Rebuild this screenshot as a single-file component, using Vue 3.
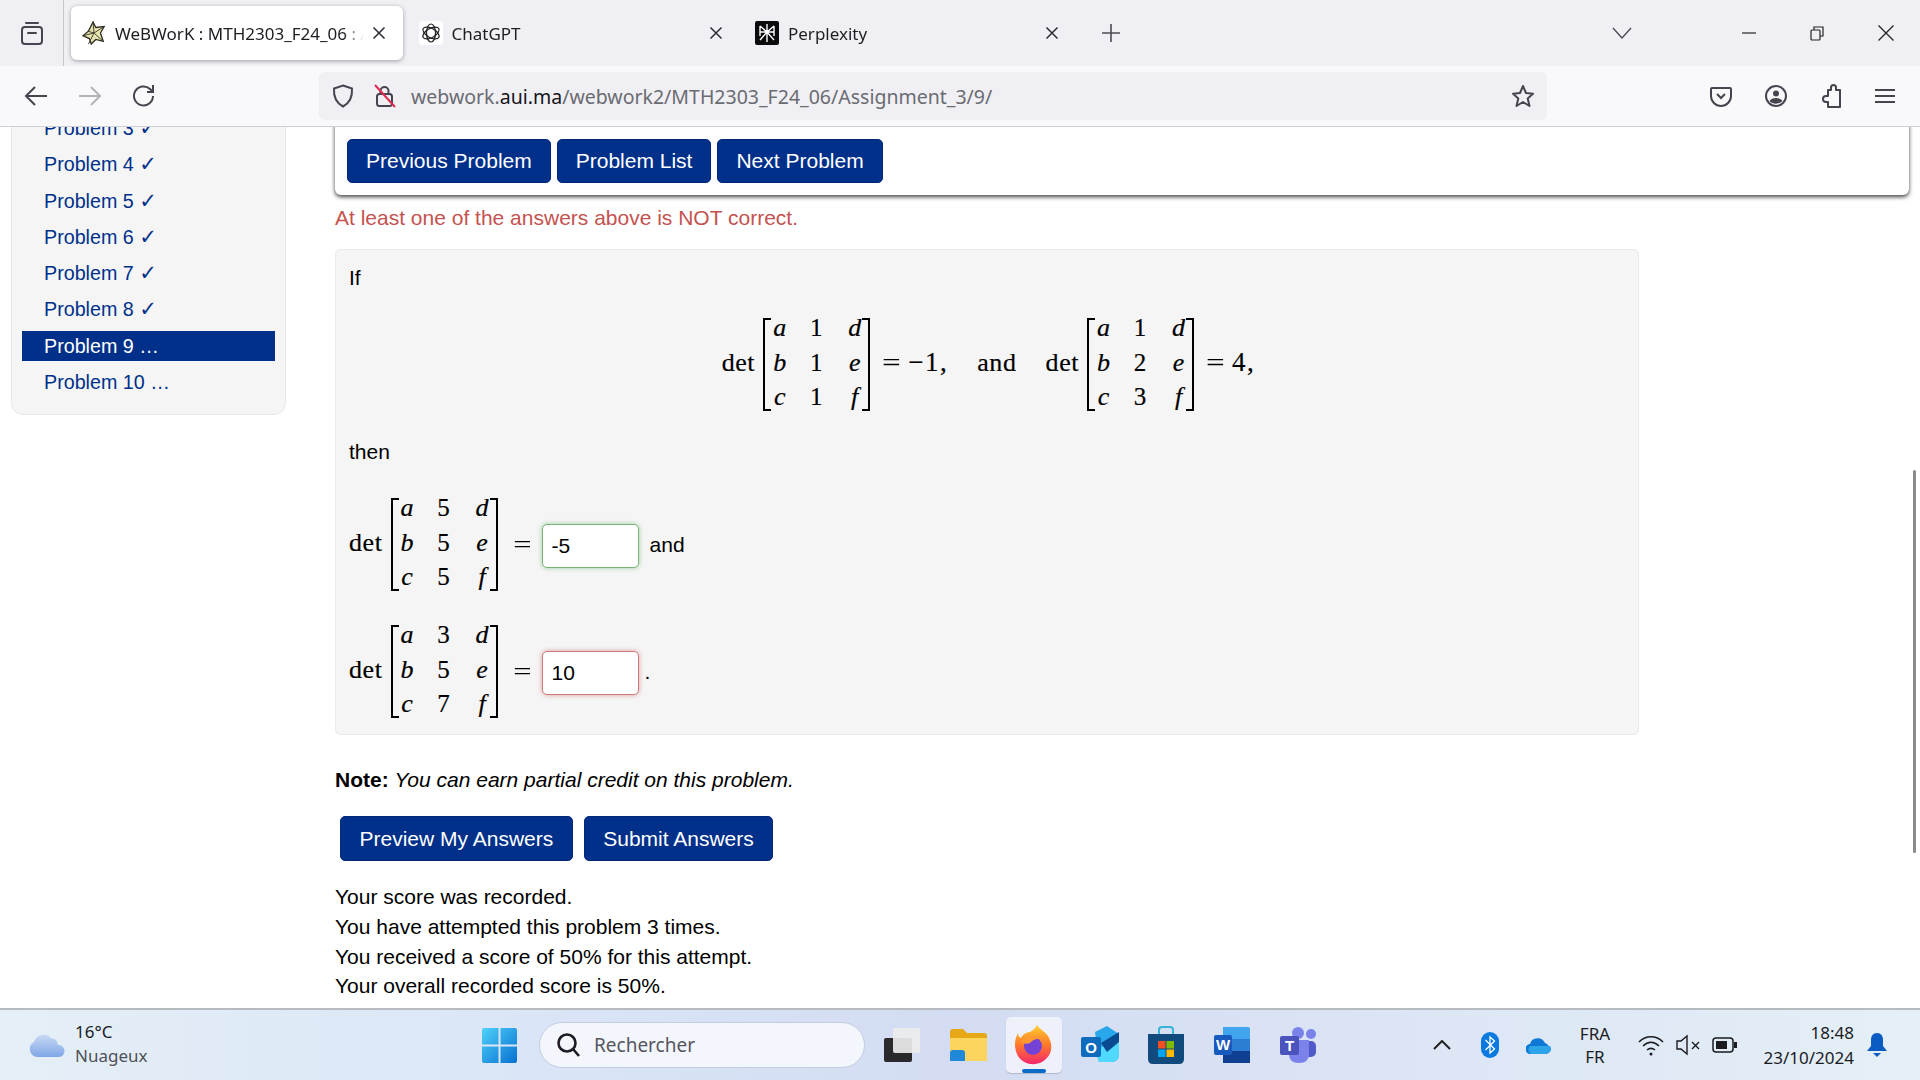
<template>
  <div class="screen">
    <!-- browser tab strip -->
    <header class="tabstrip">
      <div class="tab-manager">
        <svg width="26" height="26" viewBox="0 0 26 26" fill="none" stroke="#45454f" stroke-width="2">
          <rect x="3" y="7" width="20" height="17" rx="3" />
          <path d="M7 3h12M9 13h8" stroke-linecap="round" />
        </svg>
      </div>
      <div v-for="tab in tabs" :key="tab.title" class="tab" :class="{ 'tab--active': tab.active }">
        <span class="tab__icon">
          <svg v-if="tab.icon === 'web'" width="26" height="26" viewBox="0 0 26 26">
            <path d="M12 1l3 6 9-1-4 7 3 9-8-2-5 5-2-6-7-3 6-5z" fill="#e8e4b0" stroke="#2b2b20" stroke-width="1.4" />
            <path d="M12 1l1 12 10 9M24 6L13 13 7 25M1 16l12-3M6 11l7 2" fill="none" stroke="#3a3a28" stroke-width="1" />
          </svg>
          <svg v-else-if="tab.icon === 'gpt'" width="24" height="24" viewBox="0 0 24 24" fill="none" stroke="#222" stroke-width="1.2">
            <rect width="24" height="24" rx="4" fill="#fff" stroke="none" />
            <ellipse cx="12" cy="12" rx="4.5" ry="9" />
            <ellipse cx="12" cy="12" rx="4.5" ry="9" transform="rotate(60 12 12)" />
            <ellipse cx="12" cy="12" rx="4.5" ry="9" transform="rotate(120 12 12)" />
          </svg>
          <svg v-else width="24" height="24" viewBox="0 0 24 24" fill="none" stroke="#fff" stroke-width="1.4">
            <rect width="24" height="24" rx="2" fill="#0c0c0c" stroke="none" />
            <path d="M12 3v18M5 5l7 6 7-6M5 19l7-8 7 8M5 5v10M19 5v10M5 11h14" />
          </svg>
        </span>
        <span class="tab__title">{{ tab.title }}</span>
        <svg class="tab__close" width="14" height="14" viewBox="0 0 14 14" stroke="#2b2b33" stroke-width="1.5">
          <path d="M1.5 1.5l11 11M12.5 1.5l-11 11" />
        </svg>
      </div>
      <svg class="tab-plus" width="20" height="20" viewBox="0 0 20 20" stroke="#4c4c55" stroke-width="1.6">
        <path d="M10 1v18M1 10h18" />
      </svg>
      <span class="spacer"></span>
      <svg class="win-chevron" width="20" height="12" viewBox="0 0 20 12" fill="none" stroke="#4c4c55" stroke-width="1.4">
        <path d="M1 1l9 10 9-10" />
      </svg>
      <svg class="win-min" width="14" height="2" viewBox="0 0 14 2"><path d="M0 1h14" stroke="#333" stroke-width="1.3" /></svg>
      <svg class="win-restore" width="14" height="15" viewBox="0 0 14 15" fill="none" stroke="#222" stroke-width="1.2">
        <rect x="1" y="4" width="9" height="10" rx="1" />
        <path d="M4 4V1h9v9h-3" />
      </svg>
      <svg class="win-close" width="16" height="16" viewBox="0 0 16 16" stroke="#222" stroke-width="1.3">
        <path d="M.5.5l15 15M15.500.5l-15 15" />
      </svg>
    </header>

    <!-- navigation toolbar -->
    <nav class="toolbar">
      <svg class="nav-btn nav-btn--first" width="24" height="24" viewBox="0 0 24 24" fill="none" stroke="#45454f" stroke-width="2">
        <path d="M23 12H2M11 3l-9 9 9 9" />
      </svg>
      <svg class="nav-btn" width="24" height="24" viewBox="0 0 24 24" fill="none" stroke="#b3b3b8" stroke-width="2">
        <path d="M1 12h21M13 3l9 9-9 9" />
      </svg>
      <svg class="nav-btn" width="24" height="24" viewBox="0 0 24 24" fill="none" stroke="#45454f" stroke-width="2">
        <path d="M21 12a9.5 9.5 0 1 1-3-7l3 3M21 1v7h-6" />
      </svg>
      <div class="urlbar">
        <svg width="22" height="24" viewBox="0 0 22 24" fill="none" stroke="#45454f" stroke-width="2">
          <path d="M11 1.500l9 3c.5 8-1.500 14-9 18-7.500-4-9.500-10-9-18z" />
        </svg>
        <svg class="urlbar__lock" width="22" height="24" viewBox="0 0 22 24" fill="none">
          <rect x="3" y="10" width="15" height="12" rx="2.500" stroke="#45454f" stroke-width="2" />
          <path d="M6.500 10V7a4 4 0 0 1 8 0v3" stroke="#45454f" stroke-width="2" />
          <path d="M1 1l20 22" stroke="#e22850" stroke-width="2" />
        </svg>
        <span class="urlbar__text">webwork.<b>aui.ma</b>/webwork2/MTH2303_F24_06/Assignment_3/9/</span>
        <svg width="24" height="24" viewBox="0 0 24 24" fill="none" stroke="#45454f" stroke-width="2" stroke-linejoin="round">
          <path d="M12 2l3 7 7 .8-5.300 4.700L18.500 22 12 18l-6.500 4 1.800-7.500L2 9.800 9 9z" />
        </svg>
      </div>
      <div class="tools">
        <svg width="22" height="22" viewBox="0 0 22 22" fill="none" stroke="#45454f" stroke-width="2">
          <path d="M2 3h18a1 1 0 0 1 1 1v7a10 10 0 0 1-20 0V4a1 1 0 0 1 1-1z" />
          <path d="M7 9l4 4 4-4" />
        </svg>
        <svg width="22" height="22" viewBox="0 0 22 22" fill="none" stroke="#45454f" stroke-width="2">
          <circle cx="11" cy="11" r="10" />
          <circle cx="11" cy="8.500" r="3" fill="#45454f" stroke="none" />
          <path d="M4.500 16c2-4 11-4 13 0-3 3.500-10 3.500-13 0z" fill="#45454f" stroke="none" />
        </svg>
        <svg width="22" height="24" viewBox="0 0 22 24" fill="none" stroke="#45454f" stroke-width="2" stroke-linejoin="round">
          <path d="M8 6h3V3.500a2.500 2.500 0 0 1 5 0V6h4v17H8v-5H6a3 3 0 0 1 0-6h2z" />
        </svg>
        <svg width="20" height="16" viewBox="0 0 20 16" stroke="#45454f" stroke-width="2">
          <path d="M0 2h20M0 8h20M0 14h20" />
        </svg>
      </div>
    </nav>

    <!-- page, scrolled part way down -->
    <main class="page">
      <aside class="sidebar">
        <a
          v-for="item in problems"
          :key="item.label"
          class="sidebar__link"
          :class="{ 'sidebar__link--active': item.active }"
        >{{ item.label }} <span :class="{ sidebar__check: item.mark === '✓' }">{{ item.mark }}</span></a>
      </aside>

      <section class="content">
        <div class="nav-panel">
          <button v-for="label in navButtons" :key="label" class="btn">{{ label }}</button>
        </div>
        <p class="error">At least one of the answers above is NOT correct.</p>

        <div class="problem">
          <p class="problem__text">If</p>
          <div class="display">
            <template v-for="(m, i) in displayMatrices" :key="i">
              <span class="op">det</span>
              <div class="matrix">
                <span v-for="(c, j) in m.cells" :key="j" class="cell" :class="{ 'cell--var': isNaN(c) }">{{ c }}</span>
              </div>
              <span class="tail"><span class="eq">=</span>{{ m.tail }}</span>
              <span v-if="i === 0" class="display__and">and</span>
            </template>
          </div>
          <p class="problem__text problem__text--then">then</p>

          <div class="answer answer--first">
            <span class="op">det</span>
            <div class="matrix">
              <span v-for="(c, j) in answerA" :key="j" class="cell" :class="{ 'cell--var': isNaN(c) }">{{ c }}</span>
            </div>
            <span class="eq eq--answer">=</span>
            <input class="field field--ok" value="-5" readonly />
            <span class="answer__after">and</span>
          </div>
          <div class="answer">
            <span class="op">det</span>
            <div class="matrix">
              <span v-for="(c, j) in answerB" :key="j" class="cell" :class="{ 'cell--var': isNaN(c) }">{{ c }}</span>
            </div>
            <span class="eq eq--answer">=</span>
            <input class="field field--bad" value="10" readonly />
            <span class="answer__after answer__after--dot">.</span>
          </div>
        </div>

        <p class="note"><b>Note:</b> <i>You can earn partial credit on this problem.</i></p>
        <div class="submit-row">
          <button class="btn btn--tall">Preview My Answers</button>
          <button class="btn btn--tall">Submit Answers</button>
        </div>
        <p class="score">
          Your score was recorded.<br />
          You have attempted this problem 3 times.<br />
          You received a score of 50% for this attempt.<br />
          Your overall recorded score is 50%.
        </p>
      </section>

      <div class="scrollbar"><div class="scrollbar__thumb"></div></div>
    </main>

    <!-- windows taskbar -->
    <footer class="taskbar">
      <div class="weather">
        <svg width="38" height="26" viewBox="0 0 38 26">
          <defs>
            <linearGradient id="cloud" x1="0" y1="0" x2="0" y2="1">
              <stop offset="0" stop-color="#c9d9f5" />
              <stop offset="1" stop-color="#7fa6e6" />
            </linearGradient>
          </defs>
          <path d="M9 25a8 8 0 0 1-3-15 10 10 0 0 1 17-4 8 8 0 0 1 7 7 6 6 0 0 1 1 12z" fill="url(#cloud)" />
        </svg>
        <div class="weather__text">
          <span class="weather__temp">16°C</span>
          <span class="weather__state">Nuageux</span>
        </div>
      </div>

      <div class="slot">
        <svg width="35" height="35" viewBox="0 0 35 35">
          <defs>
            <linearGradient id="win" x1="0" y1="0" x2="1" y2="1">
              <stop offset="0" stop-color="#4fd1fb" />
              <stop offset="1" stop-color="#0670d0" />
            </linearGradient>
          </defs>
          <path d="M0 2a2 2 0 0 1 2-2h14.500v16.500H0zM18.500 0H33a2 2 0 0 1 2 2v14.500H18.500zM0 18.500h16.500V35H2a2 2 0 0 1-2-2zM18.500 18.500H35V33a2 2 0 0 1-2 2H18.500z" fill="url(#win)" />
        </svg>
      </div>
      <div class="search">
        <svg width="24" height="26" viewBox="0 0 24 26" fill="none" stroke="#1c1c22" stroke-width="2.600">
          <circle cx="11" cy="11" r="8.500" />
          <path d="M17 17l6 7" />
        </svg>
        <span>Rechercher</span>
      </div>
      <div class="slot slot--first">
        <svg width="36" height="34" viewBox="0 0 36 34">
          <rect y="10" width="28" height="24" rx="2" fill="#2a2a2c" />
          <rect x="9" width="27" height="25" rx="2" fill="#ececec" opacity=".92" />
        </svg>
      </div>
      <div class="slot">
        <svg width="37" height="32" viewBox="0 0 37 32">
          <path d="M0 3a3 3 0 0 1 3-3h10l4 4h17a3 3 0 0 1 3 3v25H0z" fill="#e6a817" />
          <path d="M0 9h37v23H0z" fill="#fcd55f" />
          <path d="M0 32V24q0-3 3-3h9q3 0 3 3v8z" fill="#1f88d8" />
        </svg>
      </div>
      <div class="slot">
        <div class="ff-tile">
          <svg width="38" height="40" viewBox="0 0 38 40">
            <defs>
              <linearGradient id="fox" x1="0" y1="0" x2="0" y2="1">
                <stop offset="0" stop-color="#ffcf30" />
                <stop offset=".5" stop-color="#ff7a2a" />
                <stop offset="1" stop-color="#f5266c" />
              </linearGradient>
            </defs>
            <path d="M22 0c3 5 8 6 11 11 5 8 4 17-1 22-8 9-23 8-29-2C-1 24-1 15 3 8c0 3 1 4 3 5 2-4 6-6 9-6 3-2 6-4 7-7z" fill="url(#fox)" />
            <circle cx="18" cy="21" r="9" fill="#7542d6" />
            <path d="M6 17c4-5 12-7 18-3-5 0-7 2-9 4-3 1-6 1-9-1z" fill="#ff9a30" />
          </svg>
          <span class="ff-tile__dot"></span>
        </div>
      </div>
      <div class="slot">
        <svg width="38" height="38" viewBox="0 0 38 38">
          <path d="M14 6L26 0l12 8v20q0 8-8 8H18z" fill="#28a8ea" />
          <path d="M14 26L38 8v20q0 8-8 8H18z" fill="#50d9ff" />
          <path d="M20 17l18-11v10L26 26z" fill="#0a4a90" />
          <rect y="11" width="20" height="20" rx="2" fill="#0f6cbd" />
          <text x="10" y="27" text-anchor="middle" class="app-letter">O</text>
        </svg>
      </div>
      <div class="slot">
        <svg width="36" height="38" viewBox="0 0 36 38">
          <path d="M11 8V4q0-3 3-3h8q3 0 3 3v4" fill="none" stroke="#33b5d6" stroke-width="2" />
          <path d="M0 8h36v25q0 5-5 5H5q-5 0-5-5z" fill="#114a7c" />
          <rect x="10" y="15" width="7.500" height="7.500" fill="#f25022" />
          <rect x="18.500" y="15" width="7.500" height="7.500" fill="#7fba00" />
          <rect x="10" y="23.500" width="7.500" height="7.500" fill="#00a4ef" />
          <rect x="18.500" y="23.500" width="7.500" height="7.500" fill="#ffb900" />
        </svg>
      </div>
      <div class="slot">
        <svg width="36" height="36" viewBox="0 0 36 36">
          <path d="M9 0h25q2 0 2 2v10H9z" fill="#41a5ee" />
          <rect x="9" y="12" width="27" height="12" fill="#2b7cd3" />
          <rect x="9" y="24" width="27" height="12" fill="#103f91" />
          <rect y="8" width="18" height="20" rx="2" fill="#185abd" />
          <text x="9" y="23" text-anchor="middle" class="app-letter">W</text>
        </svg>
      </div>
      <div class="slot">
        <svg width="36" height="36" viewBox="0 0 36 36">
          <circle cx="31" cy="7" r="5" fill="#7b83eb" />
          <circle cx="18" cy="6" r="6" fill="#7b83eb" />
          <rect x="24" y="14" width="12" height="16" rx="5" fill="#5059c9" />
          <path d="M9 13h20v14q0 9-10 9T9 27z" fill="#7b83eb" />
          <rect y="9" width="19" height="19" rx="2" fill="#4b53bc" />
          <text x="9.500" y="24" text-anchor="middle" class="app-letter">T</text>
        </svg>
      </div>

      <div class="tray">
        <div class="tray__slot tray__slot--chev">
          <svg width="18" height="10" viewBox="0 0 18 10" fill="none" stroke="#222" stroke-width="2"><path d="M1 9l8-8 8 8" /></svg>
        </div>
        <div class="tray__slot tray__slot--std">
          <svg width="18" height="26" viewBox="0 0 18 26">
            <rect width="18" height="26" rx="9" fill="#0a7ae0" />
            <path d="M4.500 8l9 9-4.500 4V5l4.500 4-9 9" fill="none" stroke="#fff" stroke-width="1.300" />
          </svg>
        </div>
        <div class="tray__slot tray__slot--std">
          <svg width="25" height="17" viewBox="0 0 25 17">
            <path d="M5 17a5 5 0 0 1-1-10 8 8 0 0 1 15-1 6 6 0 0 1 1 11z" fill="#0f78d4" />
            <path d="M5 17a5 5 0 0 1-1-8h20a5 5 0 0 1-4 8z" fill="#2da3e8" />
          </svg>
        </div>
        <div class="tray__lang">
          <span>FRA</span>
          <span>FR</span>
        </div>
        <div class="tray__slot tray__slot--wifi">
          <svg width="26" height="22" viewBox="0 0 26 22" fill="none" stroke="#1b1b1f" stroke-width="1.600">
            <path d="M1 8c7-7 17-7 24 0M5 12c5-5 11-5 16 0M9 16c3-2.500 5-2.500 8 0" />
            <circle cx="13" cy="20" r="1.500" fill="#1b1b1f" stroke="none" />
          </svg>
        </div>
        <div class="tray__slot tray__slot--mute">
          <svg width="24" height="22" viewBox="0 0 24 22" fill="none" stroke="#1b1b1f" stroke-width="1.400">
            <path d="M1 7h4l6-5v18l-6-5H1zM16 8l7 7M23 8l-7 7" />
          </svg>
        </div>
        <div class="tray__slot tray__slot--batt">
          <svg width="25" height="16" viewBox="0 0 25 16" fill="none" stroke="#1b1b1f" stroke-width="1.500">
            <rect x="1" y="1" width="20" height="14" rx="3" />
            <rect x="4" y="4" width="11" height="8" fill="#1b1b1f" stroke="none" />
            <rect x="22" y="5" width="3" height="6" fill="#1b1b1f" stroke="none" />
          </svg>
        </div>
        <div class="clock">
          <span>18:48</span>
          <span>23/10/2024</span>
        </div>
        <svg class="bell" width="22" height="25" viewBox="0 0 22 25">
          <path d="M11 0c4 0 6 3 6 7v6l4 5H1l4-5V7c0-4 2-7 6-7z" fill="#0a5cc2" />
          <path d="M7 20h8l-4 4z" fill="#0a5cc2" />
        </svg>
      </div>
    </footer>
  </div>
</template>

<script setup>
const tabs = [
  { title: 'WeBWorK : MTH2303_F24_06 : Assignment_3 : 9', icon: 'web', active: true },
  { title: 'ChatGPT', icon: 'gpt' },
  { title: 'Perplexity', icon: 'perplexity' }
]

const problems = [
  { label: 'Problem 3', mark: '✓' },
  { label: 'Problem 4', mark: '✓' },
  { label: 'Problem 5', mark: '✓' },
  { label: 'Problem 6', mark: '✓' },
  { label: 'Problem 7', mark: '✓' },
  { label: 'Problem 8', mark: '✓' },
  { label: 'Problem 9', mark: '…', active: true },
  { label: 'Problem 10', mark: '…' }
]

const navButtons = ['Previous Problem', 'Problem List', 'Next Problem']

const grid = (x, y, z) => ['a', x, 'd', 'b', y, 'e', 'c', z, 'f']

const displayMatrices = [
  { cells: grid(1, 1, 1), tail: '−1,' },
  { cells: grid(1, 2, 3), tail: '4,' }
]
const answerA = grid(5, 5, 5)
const answerB = grid(3, 5, 7)
</script>

<style>
html,
body {
  margin: 0;
  overflow: hidden;
}
</style>

<style scoped>
.screen {
  display: flex;
  flex-direction: column;
  width: 1920px;
  height: 1080px;
  overflow: hidden;
  background: #fff;
  color: #000;
  font-family: "Liberation Sans", Arial, sans-serif;
  font-size: 21px;
}

/* tab strip */
.tabstrip {
  display: flex;
  align-items: center;
  flex: none;
  height: 66px;
  background: #f0f0f4;
  font-family: "Noto Sans", sans-serif;
  font-size: 17px;
  color: #1d1d22;
}

.tab-manager {
  display: flex;
  align-items: center;
  justify-content: center;
  width: 63px;
  height: 66px;
  margin-right: 7px;
  border-right: 1px solid #c6c6ca;
  box-sizing: content-box;
}

.tab {
  display: flex;
  align-items: center;
  width: 332px;
  height: 54px;
  margin-right: 4.500px;
  padding: 0 17px 0 11px;
  box-sizing: border-box;
  border-radius: 6px;
}

.tab--active {
  background: #fff;
  box-shadow: 0 1px 4px rgba(0, 0, 0, 0.35);
}

.tab__icon {
  display: flex;
  flex: none;
  width: 24px;
  margin-right: 9px;
}

.tab__title {
  flex: 1;
  overflow: hidden;
  white-space: nowrap;
  -webkit-mask-image: linear-gradient(to right, #000 92%, transparent 100%);
  mask-image: linear-gradient(to right, #000 92%, transparent 100%);
}

.tab__close {
  flex: none;
  margin-left: 8px;
}

.tab-plus {
  margin-left: 20px;
}

.spacer {
  flex: 1;
}

.win-chevron {
  margin-right: 110px;
}

.win-min {
  margin-right: 54px;
}

.win-restore {
  margin-right: 54px;
}

.win-close {
  margin-right: 26px;
}

/* toolbar */
.toolbar {
  display: flex;
  align-items: center;
  flex: none;
  height: 61px;
  box-sizing: border-box;
  background: #f9f9fb;
  border-bottom: 1.500px solid #cfcfd4;
}

.nav-btn {
  margin-right: 30px;
}

.nav-btn--first {
  margin-left: 24px;
}

.urlbar {
  display: flex;
  align-items: center;
  width: 1228px;
  height: 48px;
  margin-left: 133px;
  padding: 0 12px 0 13px;
  box-sizing: border-box;
  background: #f0f0f4;
  border-radius: 6px;
}

.urlbar__lock {
  margin-left: 20px;
}

.urlbar__text {
  flex: 1;
  margin-left: 15px;
  font-family: "Noto Sans", sans-serif;
  font-size: 19.500px;
  color: #6b6b72;
}

.urlbar__text b {
  font-weight: 400;
  color: #15141a;
}

.tools {
  display: flex;
  align-items: center;
  gap: 33px;
  margin-left: 163px;
}

/* page */
.page {
  display: flex;
  flex: 1;
  min-height: 0;
  overflow: hidden;
}

.sidebar {
  flex: none;
  display: flex;
  flex-direction: column;
  gap: 5.600px;
  align-self: flex-start;
  width: 275px;
  margin: -15px 0 0 11px;
  padding: 0 10px 16px;
  box-sizing: border-box;
  background: #f5f5f5;
  border: 1px solid #e8e8e8;
  border-radius: 0 0 12px 12px;
  color: #00308a;
  font-size: 19.700px;
}

.sidebar__link {
  display: block;
  height: 30.700px;
  padding-left: 22px;
  line-height: 30.700px;
  white-space: nowrap;
}

.sidebar__check {
  font-family: "DejaVu Sans", sans-serif;
  font-size: 21px;
  font-weight: 400;
  line-height: 1;
}

.sidebar__link--active {
  background: #00308a;
  color: #fff;
}

.content {
  flex: none;
  width: 1574px;
  margin-left: 49px;
}

.nav-panel {
  display: flex;
  gap: 6px;
  margin-top: -10px;
  padding: 22px 12px 12px;
  background: #fff;
  border-radius: 0 0 6px 6px;
  box-shadow: 0 2px 4px rgba(0, 0, 0, 0.75);
}

.btn {
  height: 44px;
  padding: 0 18px;
  border: 1px solid #00297a;
  border-radius: 5px;
  background: #00308a;
  color: #fff;
  font-family: "Liberation Sans", Arial, sans-serif;
  font-size: 21px;
}

.btn--tall {
  height: 45px;
  padding: 0 18.500px;
}

.error {
  margin: 8px 0 16px;
  line-height: 30px;
  color: #c5524f;
}

.problem {
  width: 1304px;
  padding: 13px 13px 16px;
  box-sizing: border-box;
  background: #f5f5f5;
  border: 1px solid #eaeaea;
  border-radius: 5px;
}

.problem__text {
  margin: 0;
  line-height: 30px;
}

.problem__text--then {
  margin-top: 26px;
}

.display {
  display: flex;
  align-items: center;
  justify-content: center;
  margin-top: 25px;
  padding-left: 3px;
}

.display__and {
  margin: 0 29px 4px;
  font-family: "Liberation Serif", serif;
  font-size: 26px;
  letter-spacing: 0.6px;
  -webkit-text-stroke: 0.2px #000;
}

.op {
  margin: 0 8px 4px 0;
  font-family: "Liberation Serif", serif;
  font-size: 26px;
  letter-spacing: 0.6px;
  -webkit-text-stroke: 0.2px #000;
}

.matrix {
  display: grid;
  grid-template-columns: 33px 40px 37px;
  grid-auto-rows: 34.500px;
  align-content: center;
  flex: none;
  position: relative;
  width: 107px;
  height: 93px;
  padding-bottom: 4px;
  box-sizing: border-box;
  font-family: "Liberation Serif", serif;
  font-size: 25px;
  -webkit-text-stroke: 0.2px #000;
}

/* brackets */
.matrix::before,
.matrix::after {
  content: "";
  position: absolute;
  top: 0;
  bottom: 0;
  width: 6px;
  border: solid #000;
  border-width: 2px 0;
}

.matrix::before {
  left: 0;
  border-left-width: 2px;
}

.matrix::after {
  right: 0;
  border-right-width: 2px;
}

.cell {
  display: flex;
  align-items: center;
  justify-content: center;
}

.cell--var {
  font-style: italic;
  font-size: 26px;
}

.tail {
  margin: 0 0 4px 13px;
  font-family: "Liberation Serif", serif;
  font-size: 27px;
  letter-spacing: 1.500px;
  -webkit-text-stroke: 0.2px #000;
}

.eq {
  display: inline-block;
  width: 19px;
  margin-right: 6px;
  font-family: "Liberation Serif", serif;
  font-size: 25px;
  text-align: center;
  transform: scaleX(1.3);
}

.answer {
  display: flex;
  align-items: center;
  margin-top: 34px;
}

.answer--first {
  margin-top: 31px;
}

.eq--answer {
  margin: 0 10px 0 15px;
}

.field {
  width: 97px;
  height: 44px;
  margin-top: 2px;
  padding: 0 9px;
  box-sizing: border-box;
  background: #fff;
  border-radius: 5px;
  color: #000;
  font-family: "Liberation Sans", Arial, sans-serif;
  font-size: 21px;
  outline: none;
}

.field--ok {
  border: 1px solid #76b576;
  box-shadow: 0 0 5px rgba(90, 170, 90, 0.55);
}

.field--bad {
  border: 1px solid #d07a7a;
  box-shadow: 0 0 5px rgba(200, 90, 90, 0.55);
}

.answer__after {
  margin-left: 11px;
}

.answer__after--dot {
  margin-left: 6px;
}

.note {
  margin: 30px 0 21px;
  line-height: 30px;
}

.submit-row {
  display: flex;
  gap: 11px;
  margin-left: 5px;
}

.score {
  margin: 21px 0 0;
  line-height: 29.800px;
}

.scrollbar {
  flex: none;
  width: 3px;
  margin-left: 4px;
  padding-top: 343px;
}

.scrollbar__thumb {
  height: 383px;
  border-radius: 2px;
  background: #8a8a8a;
}

/* taskbar */
.taskbar {
  display: flex;
  align-items: center;
  flex: none;
  height: 72px;
  box-sizing: border-box;
  background: linear-gradient(90deg, #e4eff7 0%, #dbe6f7 25%, #d3dcf2 50%, #dce6f5 75%, #e4eff7 100%);
  border-top: 2px solid #b7babf;
  font-family: "Noto Sans", sans-serif;
  font-size: 17px;
  color: #1b1b1f;
}

.weather {
  display: flex;
  align-items: center;
  gap: 9px;
  width: 438px;
  margin-left: 28px;
  flex: none;
}

.weather__text {
  display: flex;
  flex-direction: column;
  gap: 1px;
  margin-bottom: 4px;
  line-height: 23px;
}

.weather__state {
  color: #505058;
}

.slot {
  display: flex;
  align-items: center;
  justify-content: center;
  flex: none;
  width: 66px;
  height: 70px;
}

.slot--first {
  margin-left: 4px;
}

.search {
  display: flex;
  align-items: center;
  gap: 14px;
  flex: none;
  width: 326px;
  height: 46px;
  margin-left: 7px;
  padding-left: 16px;
  box-sizing: border-box;
  background: #f3f6fd;
  border: 1.500px solid #c3cde0;
  border-radius: 23px;
  font-size: 19px;
  color: #56565e;
}

.ff-tile {
  display: flex;
  align-items: center;
  justify-content: center;
  position: relative;
  width: 56px;
  height: 56px;
  background: #eef1fa;
  border-radius: 5px;
  box-shadow: 0 1px 1px rgba(0, 0, 0, 0.18);
}

.ff-tile__dot {
  position: absolute;
  bottom: 0;
  left: 16px;
  width: 24px;
  height: 4px;
  border-radius: 2px;
  background: #0a6cc8;
}

.app-letter {
  fill: #fff;
  font-family: "Liberation Sans", Arial, sans-serif;
  font-size: 15px;
  font-weight: 700;
}

.tray {
  display: flex;
  align-items: center;
  flex: none;
  margin-left: 87px;
}

.tray__slot {
  display: flex;
  align-items: center;
  justify-content: center;
  flex: none;
}

.tray__slot--chev,
.tray__slot--std {
  width: 48px;
}

.tray__slot--wifi {
  width: 46px;
}

.tray__slot--mute {
  width: 28px;
}

.tray__slot--batt {
  width: 44px;
}

.tray__lang {
  display: flex;
  flex-direction: column;
  align-items: center;
  width: 66px;
  line-height: 23px;
}

.clock {
  display: flex;
  flex-direction: column;
  align-items: flex-end;
  width: 108px;
  line-height: 25px;
}

.bell {
  margin-left: 12px;
}
</style>
